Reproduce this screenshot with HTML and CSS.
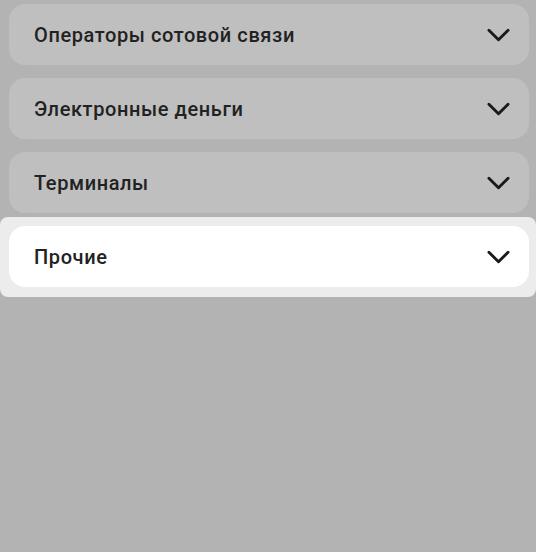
FILE: index.html
```html
<!DOCTYPE html>
<html lang="ru">
<head>
<meta charset="utf-8">
<link rel="stylesheet" href="styles.css">
</head>
<body>
<div class="list">
  <div class="row">
    <div class="card"><span class="label">Операторы сотовой связи</span>
      <svg class="chev" viewBox="0 0 24 14"><path d="M2 2 L12 12 L22 2"/></svg></div>
  </div>
  <div class="row">
    <div class="card"><span class="label">Электронные деньги</span>
      <svg class="chev" viewBox="0 0 24 14"><path d="M2 2 L12 12 L22 2"/></svg></div>
  </div>
  <div class="row">
    <div class="card"><span class="label">Терминалы</span>
      <svg class="chev" viewBox="0 0 24 14"><path d="M2 2 L12 12 L22 2"/></svg></div>
  </div>
  <div class="row active">
    <div class="card"><span class="label">Прочие</span>
      <svg class="chev" viewBox="0 0 24 14"><path d="M2 2 L12 12 L22 2"/></svg></div>
  </div>
</div>
</body>
</html>
```
FILE: styles.css
```css
html, body {
  margin: 0;
  height: 100%;
  background: #b3b3b3;
}
body {
  font-family: Roboto, "Noto Sans", sans-serif;
}
.list {
  display: flex;
  flex-direction: column;
  gap: 13px;
  padding-top: 4px;
}
.row {
  padding: 0 7px 0 9px;
}
.row.active {
  background: #ececec;
  border-radius: 8px;
  padding-top: 9px;
  padding-bottom: 10px;
  margin: -9px 0 -10px;
}
.card {
  height: 61px;
  border-radius: 16px;
  background: #bfbfbf;
  display: flex;
  align-items: center;
  justify-content: space-between;
  padding: 0 19px 0 25px;
}
.active .card {
  background: #ffffff;
}
.label {
  font-size: 20px;
  font-weight: 500;
  color: #222222;
  letter-spacing: 0.6px;
  padding-top: 1px;
}
.chev {
  width: 23px;
  height: 14px;
  fill: none;
  stroke: #1a1a1a;
  stroke-width: 3;
  stroke-linecap: round;
  stroke-linejoin: round;
}
```
